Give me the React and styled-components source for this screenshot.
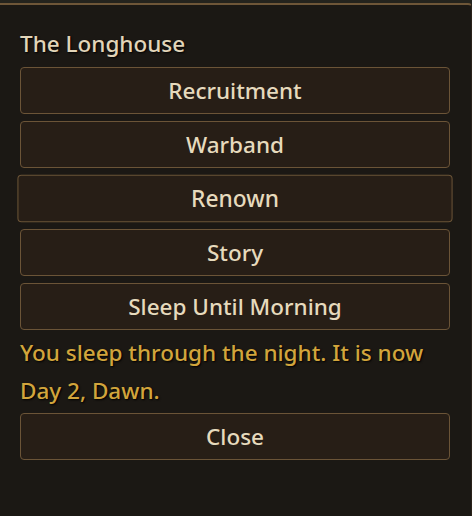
import styled, { createGlobalStyle } from 'styled-components'

const GlobalStyle = createGlobalStyle`
  html, body {
    margin: 0;
    padding: 0;
    background: #24231d;
    font-family: "Noto Sans", "Open Sans", sans-serif;
  }
`

const Panel = styled.div`
  box-sizing: border-box;
  margin-top: 3px;
  width: 472px;
  height: 513px;
  background: #1b1814;
  border-top: 2px solid #6e5638;
  border-right: 1px solid #2a2219;
  border-radius: 0 4px 0 0;
  padding: 25px 21px 0 20px;
`

const Title = styled.h2`
  margin: 0 0 10px;
  font-size: 22.5px;
  font-weight: 500;
  color: #e2d5b9;
  text-shadow: 1px 1px 2px #000;
  line-height: 27px;
`

const Menu = styled.div`
  display: flex;
  flex-direction: column;
  gap: 7px;
`

const Button = styled.button`
  box-sizing: border-box;
  width: 100%;
  height: 47px;
  background: #271e16;
  border: 1px solid #6b5437;
  border-radius: 4px;
  color: #e6dabd;
  font-family: "Noto Sans", "Open Sans", sans-serif;
  font-size: 22.5px;
  font-weight: 500;
  cursor: pointer;
  transform: ${p => (p.$hover ? 'scale(1.012)' : 'none')};
`

const Message = styled.p`
  margin: 4px 0 3px;
  font-size: 22.5px;
  font-weight: 500;
  line-height: 38px;
  color: #d2a53c;
  text-shadow: 1px 1px 2px #000;
`

const options = ['Recruitment', 'Warband', 'Renown', 'Story', 'Sleep Until Morning']

const App = () => {
  return (
    <>
      <GlobalStyle />
      <Panel>
        <Title>The Longhouse</Title>
        <Menu>
          {options.map(o => (
            <Button key={o} $hover={o === 'Renown'}>{o}</Button>
          ))}
        </Menu>
        <Message>You sleep through the night. It is now Day 2, Dawn.</Message>
        <Button>Close</Button>
      </Panel>
    </>
  )
}

export default App
